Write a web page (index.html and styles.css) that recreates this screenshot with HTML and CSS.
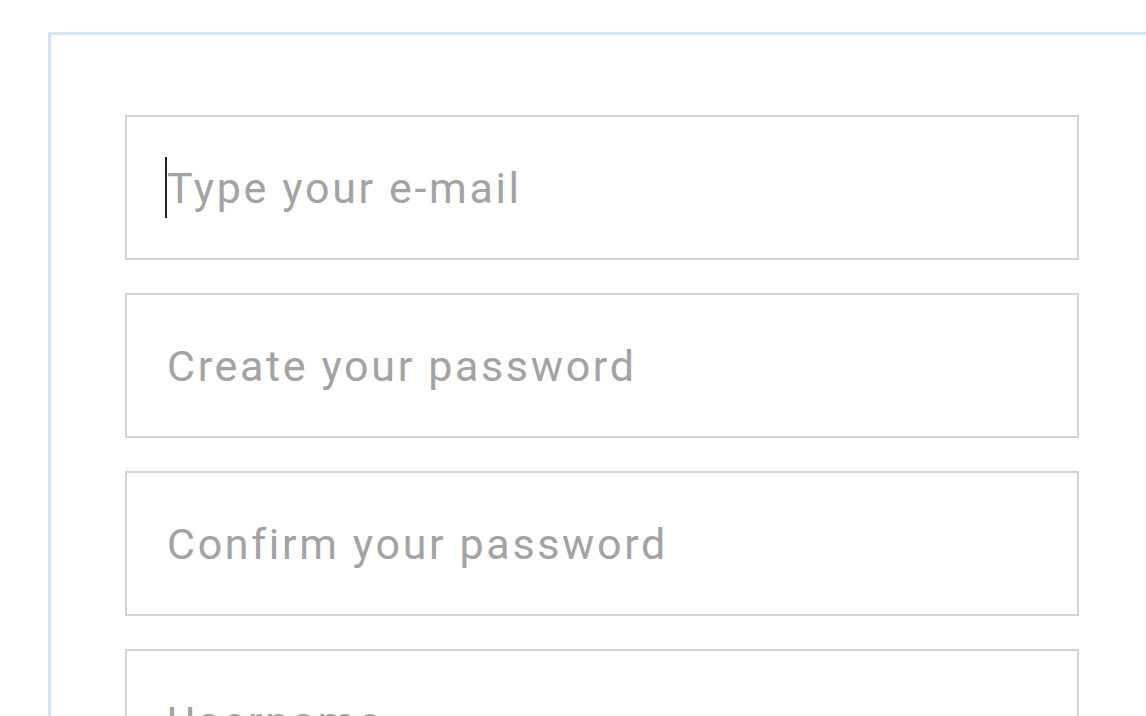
FILE: index.html
```html
<!DOCTYPE html>
<html lang="en">
<head>
<meta charset="utf-8">
<title>Sign up</title>
<link rel="stylesheet" href="styles.css">
</head>
<body>
<div class="frame">
  <form class="form">
    <div class="field">
      <input class="input" type="email" placeholder="Type your e-mail">
      <span class="caret"></span>
    </div>
    <div class="field">
      <input class="input" type="password" placeholder="Create your password">
    </div>
    <div class="field">
      <input class="input" type="password" placeholder="Confirm your password">
    </div>
    <div class="field">
      <input class="input" type="text" placeholder="Username">
    </div>
  </form>
</div>
</body>
</html>
```

FILE: styles.css
```css
html, body {
  margin: 0;
  padding: 0;
  background: #ffffff;
  overflow: hidden;
  width: 1146px;
  height: 716px;
}

.frame {
  margin: 32px 0 0 48px;
  width: 1200px;
  height: 900px;
  box-sizing: border-box;
  border-top: 3px solid #d3e3f2;
  border-left: 3px solid #d3e3f2;
  padding: 80px 0 0 74px;
  background: #ffffff;
}

.form {
  display: flex;
  flex-direction: column;
  gap: 33px;
  width: 954px;
}

.field {
  position: relative;
}

.input {
  display: block;
  width: 954px;
  height: 145px;
  box-sizing: border-box;
  margin: 0;
  border: 2px solid #d3d3d3;
  border-radius: 0;
  padding: 0 0 0 40px;
  background: #ffffff;
  font-family: Roboto, "Liberation Sans", sans-serif;
  font-size: 43px;
  letter-spacing: 2.65px;
  color: #333333;
  outline: none;
}

.input::placeholder {
  color: #a3a3a3;
  opacity: 1;
}

.caret {
  position: absolute;
  left: 40px;
  top: 42px;
  width: 2px;
  height: 61px;
  background: #222222;
}
```
